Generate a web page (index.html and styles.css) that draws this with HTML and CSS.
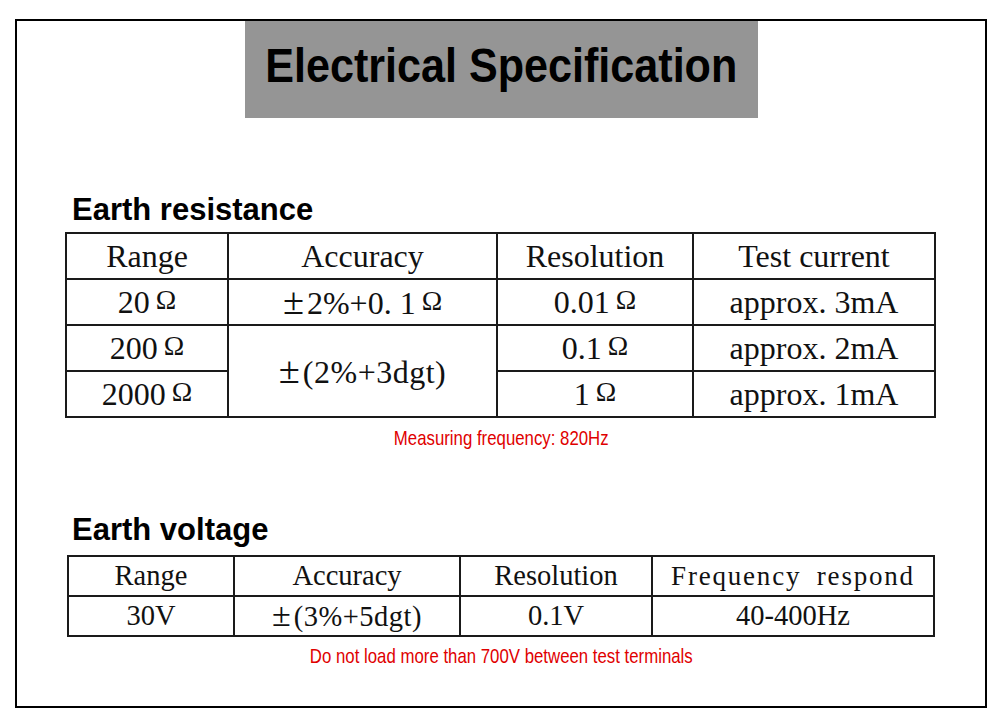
FILE: index.html
```html
<!DOCTYPE html>
<html>
<head>
<meta charset="utf-8">
<link rel="stylesheet" href="styles.css">
</head>
<body>
<div class="frame">
  <div class="banner"><h1 class="banner-title">Electrical Specification</h1></div>

  <section class="spec spec-res">
    <h2 class="spec-head">Earth resistance</h2>
    <table class="grid grid-res">
      <colgroup><col class="c1"><col class="c2"><col class="c3"><col class="c4"></colgroup>
      <tr><td>Range</td><td>Accuracy</td><td>Resolution</td><td>Test current</td></tr>
      <tr><td>20<span class="om">Ω</span></td><td><span class="pm">±</span>2%+0.&nbsp;1<span class="om">Ω</span></td><td>0.01<span class="om">Ω</span></td><td>approx. 3mA</td></tr>
      <tr><td>200<span class="om">Ω</span></td><td rowspan="2"><span class="pm">±</span><span class="cjk">(2%+3dgt)</span></td><td>0.1<span class="om">Ω</span></td><td>approx. 2mA</td></tr>
      <tr><td>2000<span class="om">Ω</span></td><td>1<span class="om">Ω</span></td><td>approx. 1mA</td></tr>
    </table>
    <p class="note note-res"><span class="note-text">Measuring frequency: 820Hz</span></p>
  </section>

  <section class="spec spec-volt">
    <h2 class="spec-head">Earth voltage</h2>
    <table class="grid grid-volt">
      <colgroup><col class="v1"><col class="v2"><col class="v3"><col class="v4"></colgroup>
      <tr><td>Range</td><td>Accuracy</td><td>Resolution</td><td class="mono">Frequency respond</td></tr>
      <tr><td>30V</td><td><span class="pm">±</span><span class="cjk">(3%+5dgt)</span></td><td>0.1V</td><td>40-400Hz</td></tr>
    </table>
    <p class="note note-volt"><span class="note-text">Do not load more than 700V between test terminals</span></p>
  </section>
</div>
</body>
</html>
```

FILE: styles.css
```css
html, body {
  margin: 0;
  padding: 0;
  background: #fff;
}

body {
  width: 1000px;
  height: 727px;
  overflow: hidden;
  font-family: "Liberation Sans", Arial, sans-serif;
}

.frame {
  box-sizing: border-box;
  margin: 19px 0 0 15px;
  width: 972px;
  height: 689px;
  border: 2px solid #000;
  display: flex;
  flex-direction: column;
}

.banner {
  align-self: center;
  width: 513px;
  height: 97px;
  background: #959595;
  display: flex;
  align-items: center;
  justify-content: center;
}

.banner-title {
  margin: 0;
  font-family: "Liberation Sans", Arial, sans-serif;
  font-weight: bold;
  font-size: 49px;
  color: #000;
  line-height: 1;
  padding-bottom: 9px;
  white-space: nowrap;
  transform: scaleX(0.88);
}

.spec-head {
  margin: 0 0 0 55px;
  font-family: "Liberation Sans", Arial, sans-serif;
  font-weight: bold;
  font-size: 31px;
  line-height: 34px;
  color: #000;
}

.spec-res .spec-head {
  margin-top: 75px;
  margin-bottom: 5px;
}

.spec-volt .spec-head {
  margin-top: 65px;
  margin-bottom: 8px;
}

.grid {
  border-collapse: collapse;
  table-layout: fixed;
  font-family: "Liberation Serif", "Times New Roman", serif;
  color: #111;
  text-align: center;
}

.grid td {
  border: 2px solid #1a1a1a;
  padding: 0;
  white-space: nowrap;
  overflow: hidden;
  line-height: 1.2;
  vertical-align: middle;
}

.grid-res {
  margin-left: 48px;
  width: 869px;
  font-size: 32px;
}

.grid-res td {
  height: 44px;
}

.grid-res .c1 { width: 162px; }
.grid-res .c2 { width: 269px; }
.grid-res .c3 { width: 196px; }
.grid-res .c4 { width: 242px; }

.grid-volt {
  margin-left: 50px;
  width: 866px;
  font-size: 28.5px;
}

.grid-volt td {
  height: 38px;
}

.grid-volt .v1 { width: 166px; }
.grid-volt .v2 { width: 226px; }
.grid-volt .v3 { width: 192px; }
.grid-volt .v4 { width: 282px; }

.om {
  font-size: 0.86em;
  line-height: 1;
  margin-left: 6px;
  position: relative;
  top: -4px;
}

.pm {
  font-size: 1.2em;
  line-height: 1;
  margin-right: 3px;
}

.cjk {
  letter-spacing: 0.5px;
}

.mono {
  font-family: "Liberation Serif", "Times New Roman", serif;
  font-size: 27px;
  letter-spacing: 1.8px;
  word-spacing: 7px;
}

.note {
  margin: 0;
  color: #e00000;
  text-align: center;
  font-size: 21px;
  line-height: 20px;
  white-space: nowrap;
}

.note-text {
  display: inline-block;
  font-family: "Liberation Sans", Arial, sans-serif;
  transform: scaleX(0.8);
}

.note-res {
  margin-top: 10px;
}

.note-volt {
  margin-top: 9px;
}
```
